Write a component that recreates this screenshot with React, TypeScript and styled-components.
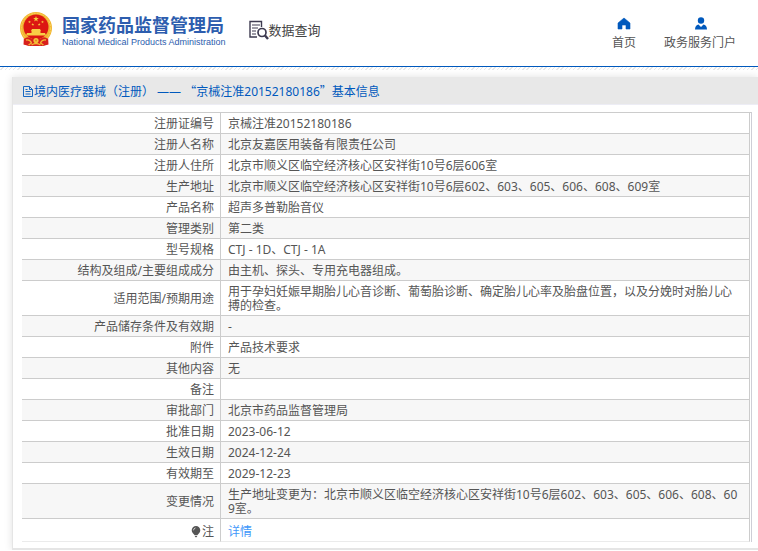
import React from "react";
import styled, { createGlobalStyle } from "styled-components";

const sans = '"Noto Sans", "Noto Sans CJK SC", sans-serif';

const GlobalStyle = createGlobalStyle`
  *, *::before, *::after { box-sizing: border-box; }
  body {
    margin: 0;
    background: #fff;
    color: #555;
    font-family: ${sans};
    font-size: 12px;
    line-height: 14px;
  }
`;

const Header = styled.header`
  display: flex;
  align-items: flex-start;
  justify-content: space-between;
  height: 67px;
  padding: 0 22px 0 20px;
  border-bottom: 1px solid #0059bd;
`;

const Hatch = styled.div`
  height: 3px;
  background: repeating-linear-gradient(135deg, #fff 0 2px, #e8e8e8 2px 3px);
`;

const Brand = styled.div`
  display: flex;
  gap: 23px;
  padding-top: 11px;
`;

const Logo = styled.a`
  display: flex;
  gap: 10px;
  color: #2d5dae;
  text-decoration: none;
`;

const LogoText = styled.span`
  display: flex;
  flex-direction: column;
  gap: 2px;
  padding-top: 3px;
`;

const LogoName = styled.span`
  font-family: "Noto Sans CJK SC", sans-serif;
  font-size: 18px;
  font-weight: 700;
  line-height: 21px;
  white-space: nowrap;
`;

const LogoEnglish = styled.span`
  font-family: "Liberation Sans", sans-serif;
  font-size: 9px;
  line-height: 11px;
  white-space: nowrap;
`;

const Query = styled.h1`
  display: flex;
  align-items: center;
  height: 20px;
  margin: 9px 0 0;
  color: #444;
  font-size: 13px;
  font-weight: 400;
  white-space: nowrap;
`;

const Nav = styled.nav`
  display: flex;
  gap: 28px;
  padding-top: 17px;
`;

const NavLink = styled.a`
  display: flex;
  flex-direction: column;
  align-items: center;
  gap: 6px;
  color: #555;
  text-decoration: none;
  white-space: nowrap;
`;

const Card = styled.main`
  margin: 7px 0 0 12px;
  border: solid #e5e5e5;
  border-width: 0 0 2px 1px;
  box-shadow: 0 0 8px rgba(0, 0, 0, 0.12);
`;

const CardTitle = styled.h2`
  display: flex;
  align-items: center;
  height: 28px;
  margin: 0;
  padding: 2px 0 0 9px;
  border-bottom: 1px solid #ededf5;
  background: #e8e8e8;
  color: #0059bd;
  font-size: 12px;
  font-weight: 400;
  white-space: pre;
`;

const Quote = styled.span`
  font-family: "Noto Sans CJK SC", sans-serif;
`;

const TableFrame = styled.div`
  margin: 7px 6px 0 9px;
  padding-right: 1px;
  border-top: 1px solid #ccc;
  border-right: 1px solid #ceced6;
`;

const CardFoot = styled.div`
  height: 6px;
`;

const Table = styled.table`
  width: 100%;
  border-collapse: separate;
  border-spacing: 0;
`;

const Label = styled.th`
  width: 199px;
  padding: 4px 6px 2px;
  border: solid #ccc;
  border-width: 0 1px 1px 0;
  font-weight: 400;
  text-align: right;
  vertical-align: middle;
`;

const Value = styled.td`
  height: 21px;
  padding: 4px 8px 2px 7px;
  border: solid #ccc;
  border-width: 0 1px 1px 0;
  word-break: break-all;
`;

const Row = styled.tr`
  &:nth-child(even) { background: #f7f7f7; }
  &:last-child > * {
    padding-top: 6px;
    border-bottom-color: #ebebeb;
  }
`;

const NoteLabel = styled.span`
  display: flex;
  align-items: center;
  justify-content: flex-end;
`;

const DetailLink = styled.a`
  color: #3f98fa;
  text-decoration: none;
`;

const star = (cx: number, cy: number, r: number) =>
  Array.from({ length: 10 }, (_, i) => {
    const a = (Math.PI / 5) * i - Math.PI / 2;
    const d = i % 2 ? r * 0.4 : r;
    return `${(cx + d * Math.cos(a)).toFixed(2)},${(cy + d * Math.sin(a)).toFixed(2)}`;
  }).join(" ");

const Emblem = () => (
  <svg width="32" height="36" viewBox="0 0 32 36" aria-hidden="true">
    <path d="M4 25 L3.500 33.500 L9 35 L12 31 H20 L23 35 L28.500 33.500 L28 25Z" fill="#d8201c" />
    <circle cx="16" cy="17" r="16" fill="#f2b632" />
    <circle cx="16" cy="17" r="14.6" fill="none" stroke="#f8d45c" strokeWidth="1" strokeDasharray="2 1" />
    <circle cx="16" cy="16" r="12.500" fill="#dc1712" />
    <polygon points={star(16, 8, 3)} fill="#f7cf3e" />
    <polygon points={star(9.5, 11, 1.5)} fill="#f7cf3e" />
    <polygon points={star(12.8, 13.5, 1.5)} fill="#f7cf3e" />
    <polygon points={star(19.2, 13.5, 1.5)} fill="#f7cf3e" />
    <polygon points={star(22.5, 11, 1.5)} fill="#f7cf3e" />
    <path d="M12 18h8l1 2H11zM11.500 20h9v2h-9zM7 22h18l1 2.500H6z" fill="#f8cf45" />
    <path d="M4 28 Q8 24.500 12 28 Q16 25 20 28 Q24 24.500 28 28 L28 33 L22 35 H10 L4 33Z" fill="#d8201c" />
    <circle cx="16" cy="29.500" r="2.600" fill="#f5c33a" />
    <circle cx="16" cy="29.500" r="1" fill="#e28b22" />
    <path d="M6 29 Q10 28 11.500 32 L8.500 34 M26 29 Q22 28 20.500 32 L23.500 34 M11.500 34 Q16 31 20.500 34" fill="none" stroke="#f2b632" strokeWidth="1.300" />
  </svg>
);

const QueryIcon = () => (
  <svg width="20" height="20" viewBox="0 0 20 20" fill="none" stroke="#3e3b50" aria-hidden="true">
    <path d="M12.500 7V1.500H1V17H8" strokeWidth="1.400" />
    <path d="M3 5H11M3 8H9M3 11H7M3 14H7" strokeWidth="1.200" />
    <circle cx="13" cy="12.500" r="4" strokeWidth="1.700" fill="#fff" />
    <path d="M16 15.500L19 19" strokeWidth="2.400" />
  </svg>
);

const HomeIcon = () => (
  <svg width="14" height="13" viewBox="0 0 14 13" fill="#0059bd" aria-hidden="true">
    <path d="M7 1L13 6V12H9V8H5V12H1V6Z" stroke="#0059bd" strokeWidth="0.600" strokeLinejoin="round" />
  </svg>
);

const UserIcon = () => (
  <svg width="14" height="13" viewBox="0 0 14 13" fill="#0059bd" aria-hidden="true">
    <circle cx="8" cy="3.500" r="3.200" />
    <path d="M2 12.400C2 9.500 3.500 8 5.500 7.500L8 10L10.500 7.500C12.500 8 14 9.500 14 12.400Z" />
  </svg>
);

const DocumentIcon = () => (
  <svg width="12" height="12" viewBox="0 0 12 12" fill="none" stroke="#0059bd" aria-hidden="true">
    <path d="M1.500 0.500H7.500L10.500 3.500V10.500H1.500ZM7.500 0.500V3.500H10.500M3.500 3.500H5.500M3.500 5.500H8.500M3.500 8H8.500" strokeWidth="0.900" />
  </svg>
);

const BulbIcon = () => (
  <svg width="11" height="12" viewBox="0 0 11 12" fill="#555" aria-hidden="true">
    <path d="M5 0A4.300 4.300 0 0 1 9.300 4.300C9.300 6.500 7.500 8 6.500 9H3.500C2.500 8 0.700 6.500 0.700 4.300A4.300 4.300 0 0 1 5 0ZM3.500 9.700H6.500L5.500 11.200H4.500Z" />
    <path d="M2.500 4.300Q2.700 2.300 4.500 1.900" fill="none" stroke="#fff" strokeWidth="0.700" />
  </svg>
);

const records: [string, string][] = [
  ["注册证编号", "京械注准20152180186"],
  ["注册人名称", "北京友嘉医用装备有限责任公司"],
  ["注册人住所", "北京市顺义区临空经济核心区安祥街10号6层606室"],
  ["生产地址", "北京市顺义区临空经济核心区安祥街10号6层602、603、605、606、608、609室"],
  ["产品名称", "超声多普勒胎音仪"],
  ["管理类别", "第二类"],
  ["型号规格", "CTJ - 1D、CTJ - 1A"],
  ["结构及组成/主要组成成分", "由主机、探头、专用充电器组成。"],
  ["适用范围/预期用途", "用于孕妇妊娠早期胎儿心音诊断、葡萄胎诊断、确定胎儿心率及胎盘位置，以及分娩时对胎儿心搏的检查。"],
  ["产品储存条件及有效期", "-"],
  ["附件", "产品技术要求"],
  ["其他内容", "无"],
  ["备注", ""],
  ["审批部门", "北京市药品监督管理局"],
  ["批准日期", "2023-06-12"],
  ["生效日期", "2024-12-24"],
  ["有效期至", "2029-12-23"],
  ["变更情况", "生产地址变更为：北京市顺义区临空经济核心区安祥街10号6层602、603、605、606、608、609室。"],
];

export default function App() {
  return (
    <>
      <GlobalStyle />
      <Header>
        <Brand>
          <Logo href="#">
            <Emblem />
            <LogoText>
              <LogoName>国家药品监督管理局</LogoName>
              <LogoEnglish>National Medical Products Administration</LogoEnglish>
            </LogoText>
          </Logo>
          <Query>
            <QueryIcon />
            数据查询
          </Query>
        </Brand>
        <Nav>
          <NavLink href="#"><HomeIcon />首页</NavLink>
          <NavLink href="#"><UserIcon />政务服务门户</NavLink>
        </Nav>
      </Header>
      <Hatch />
      <Card>
        <CardTitle>
          <DocumentIcon />
          <span>
            境内医疗器械（注册） —— <Quote>“</Quote>京械注准20152180186<Quote>”</Quote>基本信息
          </span>
        </CardTitle>
        <TableFrame>
          <Table>
            <tbody>
              {records.map(([label, value]) => (
                <Row key={label}>
                  <Label scope="row">{label}</Label>
                  <Value>{value}</Value>
                </Row>
              ))}
              <Row>
                <Label scope="row"><NoteLabel><BulbIcon />注</NoteLabel></Label>
                <Value><DetailLink href="#">详情</DetailLink></Value>
              </Row>
            </tbody>
          </Table>
        </TableFrame>
        <CardFoot />
      </Card>
    </>
  );
}
